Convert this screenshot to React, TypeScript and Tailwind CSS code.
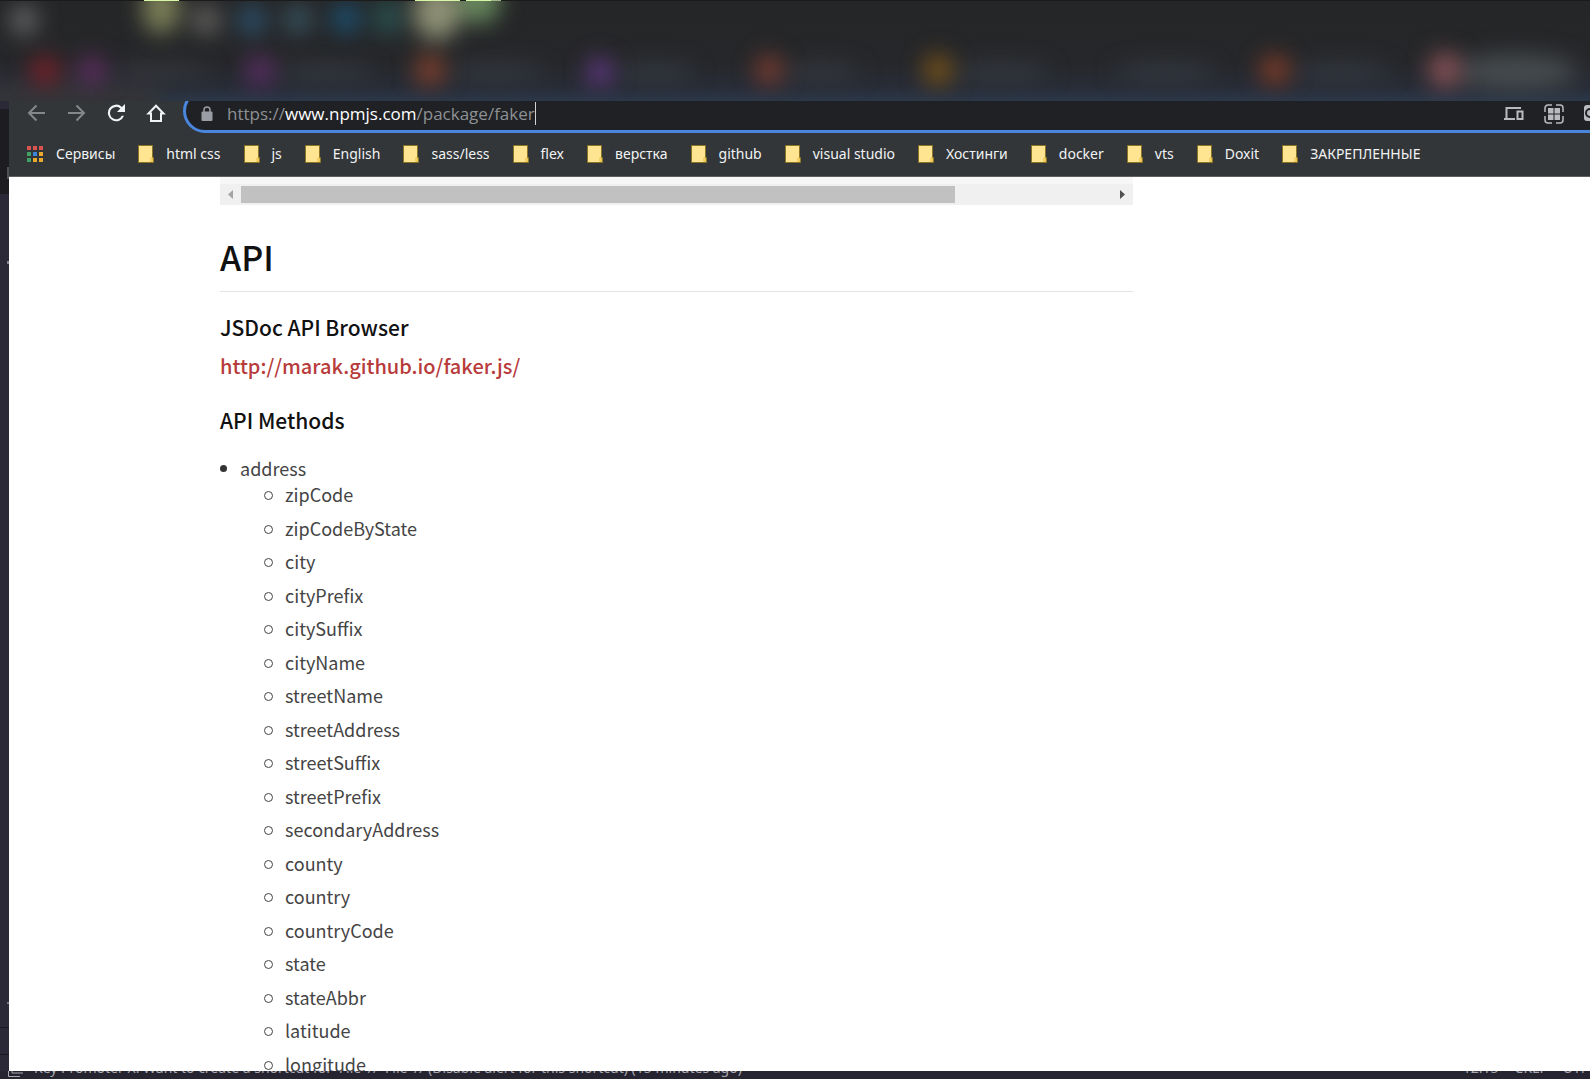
import React from 'react';

const bookmarks = [
  'html css', 'js', 'English', 'sass/less', 'flex', 'верстка', 'github',
  'visual studio', 'Хостинги', 'docker', 'vts', 'Doxit', 'ЗАКРЕПЛЕННЫЕ',
];

const methods = [
  'zipCode', 'zipCodeByState', 'city', 'cityPrefix', 'citySuffix', 'cityName',
  'streetName', 'streetAddress', 'streetSuffix', 'streetPrefix', 'secondaryAddress',
  'county', 'country', 'countryCode', 'state', 'stateAbbr', 'latitude', 'longitude',
];

type Glow = [x: number, y: number, rx: number, ry: number, color: string];

const icons: Glow[] = [
  [24, 20, 14, 15, '#636566'],
  [161, 8, 19, 26, '#7c8058'],
  [206, 20, 14, 15, '#646360'],
  [252, 20, 15, 15, '#2c506a'],
  [298, 19, 14, 15, '#385360'],
  [346, 18, 15, 16, '#1d4f6d'],
  [388, 17, 14, 18, '#2a5252'],
  [437, 12, 24, 28, '#8e9175'],
  [480, 0, 20, 24, '#688a5e'],
  [45, 71, 15, 14, '#7a1f28'],
  [92, 71, 14, 15, '#5f2d60'],
  [260, 71, 14, 16, '#592d63'],
  [430, 70, 15, 16, '#7f402d'],
  [600, 72, 13, 15, '#5e377f'],
  [769, 70, 14, 15, '#7a3c30'],
  [938, 70, 15, 16, '#735019'],
  [1275, 70, 15, 15, '#7f3c27'],
  [1445, 70, 17, 18, '#835055'],
];

const labels: Glow[] = [
  [160, 72, 50, 8, '#35373c'],
  [325, 72, 50, 8, '#34383f'],
  [495, 72, 50, 8, '#353940'],
  [655, 72, 40, 8, '#353a42'],
  [820, 72, 40, 8, '#36393f'],
  [1000, 72, 50, 8, '#353a41'],
  [1165, 72, 50, 8, '#353a43'],
  [1340, 72, 50, 8, '#353a43'],
  [1515, 72, 62, 18, '#464b4e'],
];

function Ellipses({ items }: { items: Glow[] }) {
  return (
    <>
      {items.map(([x, y, rx, ry, color]) => (
        <ellipse key={x} cx={x} cy={y} rx={rx} ry={ry} fill={color} />
      ))}
    </>
  );
}

function BlurredTabs() {
  return (
    <svg className="block h-full w-full" viewBox="0 0 1590 101" preserveAspectRatio="none" aria-hidden="true">
      <defs>
        <filter id="soft" filterUnits="userSpaceOnUse" x="-60" y="-60" width="1710" height="230" colorInterpolationFilters="sRGB">
          <feGaussianBlur stdDeviation="11" />
        </filter>
        <linearGradient id="shade" x1="0" y1="0" x2="0" y2="1">
          <stop offset="0" stopColor="#252627" />
          <stop offset="0.6" stopColor="#26272a" />
          <stop offset="0.85" stopColor="#282c36" />
          <stop offset="1" stopColor="#2b3748" />
        </linearGradient>
      </defs>
      <rect width="1590" height="101" fill="url(#shade)" />
      <g filter="url(#soft)">
        <rect x="-40" y="82" width="200" height="60" fill="#343437" />
      </g>
      <g filter="url(#soft)"><Ellipses items={labels} /></g>
      <g filter="url(#soft)"><Ellipses items={icons} /></g>
      <rect width="1590" height="1" fill="#1b1b1c" />
      <rect x="144" width="35" height="1" fill="#d8f5a6" />
      <rect x="415" width="45" height="1" fill="#d8f5a6" />
      <rect x="466" width="25" height="1" fill="#d8f5a6" />
      <rect x="491" width="10" height="1" fill="#a4b688" />
    </svg>
  );
}

function Folder() {
  return (
    <svg className="h-[18px] w-4 shrink-0" viewBox="0 0 16 18" aria-hidden="true">
      <path d="M.5.5h14v12h1v5H.5z" fill="#ffe591" stroke="#8c7426" />
      <path d="M12.900 16.500v-3.500h1.700v3.500z" fill="#ffe591" stroke="#e3b93b" strokeWidth="0.800" />
    </svg>
  );
}

function Apps() {
  const colors = ['#d9534f', '#d9534f', '#d9534f', '#43a367', '#3f86d8', '#e8a92d', '#43a367', '#e8a92d', '#e8a92d'];
  return (
    <svg className="h-[18px] w-[18px] shrink-0" viewBox="0 0 18 18" aria-hidden="true">
      {colors.map((c, i) => (
        <rect key={i} x={1 + (i % 3) * 6} y={1 + Math.floor(i / 3) * 6} width="4" height="4" fill={c} />
      ))}
    </svg>
  );
}

function Toolbar() {
  return (
    <div className="flex h-8 shrink-0 bg-[#323639]">
      <nav className="flex w-[174px] shrink-0 items-start gap-4 pl-[15px]" aria-label="Navigation">
        <button type="button" aria-label="Back" className="h-6 w-6">
          <svg viewBox="0 0 24 24" fill="none" stroke="#85888b" strokeWidth="2"><path d="M21 12H5M12.500 4.500L5 12l7.500 7.500" /></svg>
        </button>
        <button type="button" aria-label="Forward" className="h-6 w-6">
          <svg viewBox="0 0 24 24" fill="none" stroke="#85888b" strokeWidth="2"><path d="M4 12h16M12.500 4.500L20 12l-7.500 7.500" /></svg>
        </button>
        <button type="button" aria-label="Reload" className="h-6 w-6">
          <svg viewBox="0 0 24 24" fill="#f1f3f4"><path d="M17.9 5.900A8.300 8.300 0 1 0 20 14.700h-2.200A6.200 6.200 0 1 1 16.400 7.500L13 11h8V3z" /></svg>
        </button>
        <button type="button" aria-label="Home" className="h-6 w-6">
          <svg viewBox="0 0 24 24" fill="none" stroke="#f1f3f4" strokeWidth="2"><path d="M4.500 12.500H7V20h10v-7.500h2.500L12 4.800z" /></svg>
        </button>
      </nav>
      <div className="flex min-w-0 flex-1 overflow-hidden">
        <div className="-mt-3 -mr-6 flex h-[44px] min-w-0 flex-1 items-center rounded-full border-3 border-[#4a86de] bg-[#202124] pt-1.5 pr-[7px] pl-[15px]">
          <svg className="h-4 w-3 shrink-0" viewBox="0 0 12 16" aria-hidden="true">
            <rect x="0.5" y="5.5" width="11" height="9.500" rx="1" fill="#9a9da3" />
            <path d="M3 6V4a3 3 0 0 1 6 0v2" fill="none" stroke="#9a9da3" strokeWidth="1.5" />
          </svg>
          <div
            role="textbox"
            aria-label="Address"
            contentEditable
            suppressContentEditableWarning
            className="ml-[14px] flex-1 font-['Open_Sans',sans-serif] text-[17px] leading-6 text-[#8e9194] outline-none"
          >
            https://<span className="text-white">www.npmjs.com</span>/package/faker<span className="border-r border-[#d0d2d4]" />
          </div>
          <div className="flex items-center gap-5 text-[#b9bbbe]">
            <button type="button" aria-label="Send to your devices" className="h-5 w-5">
              <svg viewBox="0 0 20 20" fill="none" stroke="currentColor" strokeWidth="2"><path d="M2.500 15V4H17M0 15h11M13.500 7.500h5V15h-5z" /></svg>
            </button>
            <button type="button" aria-label="Extensions grid" className="h-5 w-5">
              <svg viewBox="0 0 20 20" fill="none" stroke="currentColor" strokeWidth="1.5">
                <path d="M1 8V4a3 3 0 0 1 3-3h4M12 1h4a3 3 0 0 1 3 3v4M19 12v4a3 3 0 0 1-3 3h-4M8 19H4a3 3 0 0 1-3-3v-4" />
                <path d="M4 4h5.500v5.500H4zM10.500 4H16v5.500h-5.500zM4 10.500h5.500V16H4zM10.500 10.500H16V16h-5.500z" fill="currentColor" stroke="none" />
              </svg>
            </button>
            <button type="button" aria-label="Camera" className="h-5 w-5">
              <svg viewBox="0 0 20 20"><rect y="1" width="20" height="16" rx="3" fill="currentColor" /><circle cx="6" cy="9" r="4" fill="none" stroke="#202124" strokeWidth="2" /></svg>
            </button>
          </div>
        </div>
      </div>
    </div>
  );
}

function Bookmarks() {
  return (
    <nav className="flex h-11 shrink-0 items-center gap-[23px] overflow-hidden border-b border-[#5d6062] bg-[#323639] pb-0.5 pl-[17px] font-['Noto_Sans',sans-serif] text-[14px] whitespace-nowrap text-[#f1f3f4]" aria-label="Bookmarks">
      <button type="button" className="flex items-center gap-3"><Apps />Сервисы</button>
      {bookmarks.map((name) => (
        <button type="button" key={name} className="flex items-center gap-3"><Folder />{name}</button>
      ))}
    </nav>
  );
}

function ScrollBar() {
  return (
    <div className="bg-[#f7f7f7] pt-[7px]">
      <div className="flex h-[21px] items-center bg-[#f0f0f0] px-2">
        <svg className="h-[9px] w-[5px]" viewBox="0 0 5 9" aria-hidden="true"><path d="M5 0v9L0 4.500z" fill="#a3a3a3" /></svg>
        <div className="mx-2 flex-1"><div className="h-[17px] w-[82%] bg-[#c1c1c1]" /></div>
        <svg className="h-[9px] w-[5px]" viewBox="0 0 5 9" aria-hidden="true"><path d="M0 0v9l5-4.500z" fill="#505050" /></svg>
      </div>
    </div>
  );
}

function LeftEdge() {
  return (
    <div className="flex w-[9px] shrink-0 flex-col items-end bg-[#2b2937]" aria-hidden="true">
      <div className="h-2" />
      <div className="flex h-[85px] w-full justify-end bg-[#1d1c21] pt-[58px]"><div className="h-3 w-0.5 bg-[#505054]" /></div>
      <div className="mt-[67px] h-[3px] w-0.5 bg-[#85848e]" />
      <div className="mt-auto mb-[23px] h-0.5 w-0.5 bg-[#77767f]" />
      <div className="mb-[26px] h-px w-full bg-[#191820]" />
      <div className="mb-4 h-px w-full bg-[#191820]" />
    </div>
  );
}

export default function App() {
  return (
    <div className="flex h-screen flex-col overflow-hidden bg-[#262431]">
      <header className="h-[101px] shrink-0"><BlurredTabs /></header>
      <div className="flex min-h-0 flex-1">
        <LeftEdge />
        <div className="flex min-w-0 flex-1 flex-col overflow-hidden bg-white">
          <Toolbar />
          <Bookmarks />
          <main className="ml-[211px] w-[913px] max-w-full font-['Noto_Sans_CJK_SC',sans-serif] text-[18px] text-[#444]">
            <ScrollBar />
            <h1 className="mt-[27px] border-b border-[#e2e2e2] pb-2.5 text-[34px] leading-[49px] font-medium text-[#111]">API</h1>
            <h2 className="mt-[19px] text-[21px] leading-8 font-medium text-[#111]">JSDoc API Browser</h2>
            <h2 className="mt-[7px] text-[20px] leading-8 font-medium text-[#b83b3b]"><a href="http://marak.github.io/faker.js/">http://marak.github.io/faker.js/</a></h2>
            <h2 className="mt-[22px] text-[21px] leading-8 font-medium text-[#111]">API Methods</h2>
            <ul className="mt-[19px] leading-[26px]">
              <li>
                <div className="flex items-center gap-[13px]"><span className="h-[7px] w-[7px] rounded-full bg-[#333]" />address</div>
                <ul className="grid h-[603px] auto-rows-fr pl-[44px]">
                  {methods.map((m) => (
                    <li key={m} className="flex items-start gap-3">
                      <span className="mt-2.5 h-[9px] w-[9px] rounded-full border border-[#444]" />{m}
                    </li>
                  ))}
                </ul>
              </li>
            </ul>
          </main>
        </div>
      </div>
      <footer className="flex h-2 shrink-0 items-end overflow-hidden bg-[#262431] pb-0.5 pl-2 font-['Noto_Sans',sans-serif] text-[14px] leading-[18px] whitespace-nowrap text-[#a9a8b0]">
        <svg className="h-4 w-4 shrink-0" viewBox="0 0 16 16" fill="none" stroke="currentColor" aria-hidden="true"><path d="M4 0v12h11M.5 3v12.500H12" /></svg>
        <span className="ml-2.5">Key Promoter X: Want to create a shortcut for 'File' // 'File' // (Disable alert for this shortcut) (15 minutes ago)</span>
        <span className="ml-auto">12:15</span>
        <span className="ml-4">CRLF</span>
        <span className="mr-0.5 ml-4">UTF</span>
      </footer>
    </div>
  );
}
